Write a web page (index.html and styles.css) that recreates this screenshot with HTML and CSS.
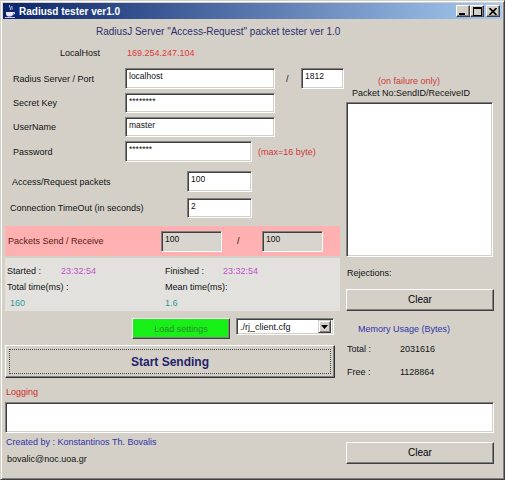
FILE: index.html
```html
<!DOCTYPE html>
<html>
<head>
<meta charset="utf-8">
<title>Radiusd tester ver1.0</title>
<link rel="stylesheet" href="styles.css">
</head>
<body>
<div class="window">
  <div class="titlebar">
    <svg class="app-icon" width="10" height="14" viewBox="0 0 10 14">
      <path d="M5 1 C3 3 7 4 5 6 M7 2 C6 3.5 8 4 7 5.5" stroke="#e8e4ff" stroke-width="1" fill="none"/>
      <path d="M1 8 H8 V10 C8 12 6 12.5 4.5 12.5 C3 12.5 1 12 1 10 Z" fill="#e8e4ff"/>
      <path d="M8 8.5 H9.5 V10 H8" stroke="#e8e4ff" stroke-width="1" fill="none"/>
      <rect x="0" y="13" width="10" height="1" fill="#c8c0f0"/>
    </svg>
    <span class="title">Radiusd tester ver1.0</span>
    <div class="wbtns">
      <div class="wbtn"><svg width="8" height="7" viewBox="0 0 8 7"><rect x="0" y="5" width="6" height="2" fill="#000"/></svg></div>
      <div class="wbtn"><svg width="9" height="9" viewBox="0 0 9 9"><rect x="0.5" y="0.5" width="8" height="8" fill="none" stroke="#000"/><rect x="0" y="0" width="9" height="2" fill="#000"/></svg></div>
      <div class="wbtn close"><svg width="8" height="7" viewBox="0 0 8 7"><path d="M0.5 0 L7.5 7 M7.5 0 L0.5 7" stroke="#000" stroke-width="1.6"/></svg></div>
    </div>
  </div>
  <div class="client">
    <div class="header">RadiusJ Server "Access-Request" packet tester ver 1.0</div>
    <div class="localhost"><span class="lh-label">LocalHost</span><span class="ip">169.254.247.104</span></div>
    <div class="main">
      <div class="left">
        <div class="row r1">
          <span class="label">Radius Server / Port</span>
          <div class="input w150 h21">localhost</div>
          <span class="slash">/</span>
          <div class="input w43 h21">1812</div>
        </div>
        <div class="row r2">
          <span class="label">Secret Key</span>
          <div class="input w150 h20">********</div>
        </div>
        <div class="row r2">
          <span class="label">UserName</span>
          <div class="input w150 h20">master</div>
        </div>
        <div class="row r2">
          <span class="label">Password</span>
          <div class="input w127 h21">*******</div>
          <span class="note">(max=16 byte)</span>
        </div>
        <div class="row r5">
          <span class="label wide">Access/Request packets</span>
          <div class="input w65 h21">100</div>
        </div>
        <div class="row r6">
          <span class="label wide2">Connection TimeOut (in seconds)</span>
          <div class="input w65 h20">2</div>
        </div>
        <div class="band">
          <span class="band-label">Packets Send / Receive</span>
          <div class="input gray w61 h21">100</div>
          <span class="band-slash">/</span>
          <div class="input gray w61 h21">100</div>
        </div>
        <div class="stats">
          <div class="stat-row">
            <div class="cell"><span class="k1">Started :</span><span class="time">23:32:54</span></div>
            <div class="cell"><span class="k2">Finished :</span><span class="time">23:32:54</span></div>
          </div>
          <div class="stat-row">
            <div class="cell">Total time(ms) :</div>
            <div class="cell">Mean time(ms):</div>
          </div>
          <div class="stat-row">
            <div class="cell num">160</div>
            <div class="cell num2">1.6</div>
          </div>
        </div>
        <div class="load-row">
          <div class="btn green">Load settings</div>
          <div class="combo">
            <span class="combo-text">./rj_client.cfg</span>
            <span class="combo-btn"><svg width="7" height="4" viewBox="0 0 7 4"><path d="M0 0 H7 L3.5 4 Z" fill="#000"/></svg></span>
          </div>
        </div>
        <div class="btn start"><span class="focus">Start Sending</span></div>
      </div>
      <div class="right">
        <div class="failure">(on failure only)</div>
        <div class="pkt">Packet No:SendID/ReceiveID</div>
        <div class="input area"></div>
        <div class="rej">Rejections:</div>
        <div class="btn clear">Clear</div>
        <div class="mem">Memory Usage (Bytes)</div>
        <div class="memrow first"><span class="mk">Total :</span><span>2031616</span></div>
        <div class="memrow second"><span class="mk">Free :</span><span>1128864</span></div>
      </div>
    </div>
    <div class="logging">Logging</div>
    <div class="input logbox"></div>
    <div class="footer">
      <div class="credits">
        <div class="by">Created by : Konstantinos Th. Bovalis</div>
        <div class="mail">bovalic@noc.uoa.gr</div>
      </div>
      <div class="btn clear foot">Clear</div>
    </div>
  </div>
</div>
</body>
</html>
```
FILE: styles.css
```css
* { box-sizing: border-box; }
body {
  margin: 0;
  background: #d4d0c8;
  font-family: "Liberation Sans", Arial, sans-serif;
}
.window {
  width: 505px;
  height: 480px;
  border: 1px solid;
  border-color: #d4d0c8 #404040 #404040 #d4d0c8;
  box-shadow: inset 1px 1px #ffffff, inset -1px -1px #808080;
  padding: 2px;
  background: #d4d0c8;
  display: flex;
  flex-direction: column;
}
.titlebar {
  height: 16px;
  flex: none;
  margin-bottom: 1px;
  background: linear-gradient(to right, #0a246a, #a6caf0);
  display: flex;
  align-items: center;
  padding: 0 2px;
}
.app-icon { margin-left: 0; margin-right: 4px; flex: none; }
.title {
  color: #fff;
  font-weight: bold;
  font-size: 10px;
  flex: 1;
}
.wbtns { display: flex; }
.wbtn {
  width: 14px;
  height: 12px;
  background: #d4d0c8;
  border: 1px solid;
  border-color: #fff #404040 #404040 #fff;
  box-shadow: inset -1px -1px #808080;
  display: flex;
  align-items: center;
  justify-content: center;
}
.wbtn.close { margin-left: 2px; }

.client {
  flex: 1;
  padding-left: 2px;
  font-size: 9px;
  line-height: 12px;
  color: #111;
}
.header {
  margin-top: 6px;
  padding-left: 91px;
  font-size: 10px;
  color: #2e2e6e;
}
.localhost { margin-top: 9px; display: flex; padding-left: 55px; }
.lh-label { width: 67px; }
.ip { color: #e03838; }

.main { margin-top: 9px; display: flex; align-items: flex-start; }
.left { width: 339px; flex: none; }
.right { width: 148px; margin-left: 2px; flex: none; }

.row { display: flex; align-items: center; }
.row .label { width: 120px; padding-left: 8px; flex: none; }
.row .label.wide { width: 182px; padding-left: 7px; }
.row .label.wide2 { width: 182px; padding-left: 5px; }
.r2 { margin-top: 4px; }
.r5 { margin-top: 9px; }
.r6 { margin-top: 6px; }

.input {
  background: #fff;
  border: 1px solid;
  border-color: #808080 #ffffff #ffffff #808080;
  box-shadow: inset 1px 1px #404040, inset -1px -1px #d4d0c8;
  padding: 2px 3px;
  font-size: 8.5px;
  line-height: 11px;
  flex: none;
}
.input.gray { background: #d8d5ce; }
.w150 { width: 150px; }
.w127 { width: 127px; }
.w65 { width: 65px; }
.w61 { width: 61px; }
.w43 { width: 43px; }
.h21 { height: 21px; }
.h20 { height: 20px; }
.slash { width: 26px; padding-left: 11px; }
.note { margin-left: 6px; color: #d03838; }

.band {
  margin-top: 8px;
  width: 335px;
  height: 30px;
  background: #ffb0b0;
  display: flex;
  align-items: center;
}
.band-label { width: 156px; padding-left: 3px; color: #5a1818; flex: none; }
.band-slash { width: 40px; padding-left: 15px; }

.stats {
  margin-top: 2px;
  width: 335px;
  height: 53px;
  background: #e2e1de;
  padding-top: 7px;
}
.stat-row { display: flex; height: 12px; margin-bottom: 4px; }
.stat-row .cell { display: flex; }
.stat-row .cell:first-child { width: 160px; padding-left: 2px; }
.k1 { width: 54px; }
.k2 { width: 58px; }
.time { color: #c34fc9; }
.cell.num { color: #2e9a9a; padding-left: 5px !important; }
.cell.num2 { color: #2e9a9a; }

.load-row { margin-top: 7px; display: flex; padding-left: 127px; }
.btn {
  background: #d4d0c8;
  border: 1px solid;
  border-color: #ffffff #404040 #404040 #ffffff;
  box-shadow: inset -1px -1px #808080;
  display: flex;
  align-items: center;
  justify-content: center;
  color: #000;
}
.btn.green {
  width: 98px;
  height: 21px;
  background: #16f016;
  color: #2f8a2f;
  font-size: 9px;
}
.combo {
  margin-left: 6px;
  width: 98px;
  height: 17px;
  background: #fff;
  border: 1px solid;
  border-color: #808080 #ffffff #ffffff #808080;
  box-shadow: inset 1px 1px #404040, inset -1px -1px #d4d0c8;
  display: flex;
  align-items: center;
  padding: 2px 2px 2px 3px;
}
.combo-text { flex: 1; font-size: 9px; }
.combo-btn {
  width: 13px;
  height: 13px;
  background: #d4d0c8;
  border: 1px solid;
  border-color: #d4d0c8 #404040 #404040 #d4d0c8;
  box-shadow: inset 1px 1px #fff, inset -1px -1px #808080;
  display: flex;
  align-items: center;
  justify-content: center;
}
.btn.start {
  margin-top: 6px;
  width: 330px;
  height: 33px;
  border-color: #ffffff #303030 #303030 #ffffff;
  padding: 3px;
}
.start .focus {
  width: 100%;
  height: 100%;
  border: 1px dotted #444;
  display: flex;
  align-items: center;
  justify-content: center;
  font-size: 12px;
  font-weight: bold;
  color: #23236a;
}

.failure { margin-top: 7px; padding-left: 32px; color: #d03838; }
.pkt { padding-left: 6px; }
.input.area { margin-top: 3px; width: 147px; height: 155px; }
.rej { margin-top: 10px; padding-left: 1px; }
.btn.clear { margin-top: 10px; width: 148px; height: 22px; font-size: 10px; }
.mem { margin-top: 12px; padding-left: 12px; color: #3232a8; }
.memrow { display: flex; padding-left: 1px; }
.memrow.first { margin-top: 8px; }
.memrow.second { margin-top: 11px; }
.mk { width: 53px; }

.logging { margin-top: 8px; padding-left: 1px; color: #d02828; }
.input.logbox { margin-top: 4px; width: 489px; height: 31px; }
.footer {
  margin-top: 3px;
  width: 489px;
  display: flex;
  justify-content: space-between;
  align-items: flex-start;
}
.by { color: #3232a8; padding-left: 1px; }
.mail { margin-top: 5px; padding-left: 2px; }
.btn.clear.foot { margin-top: 6px; }
```
